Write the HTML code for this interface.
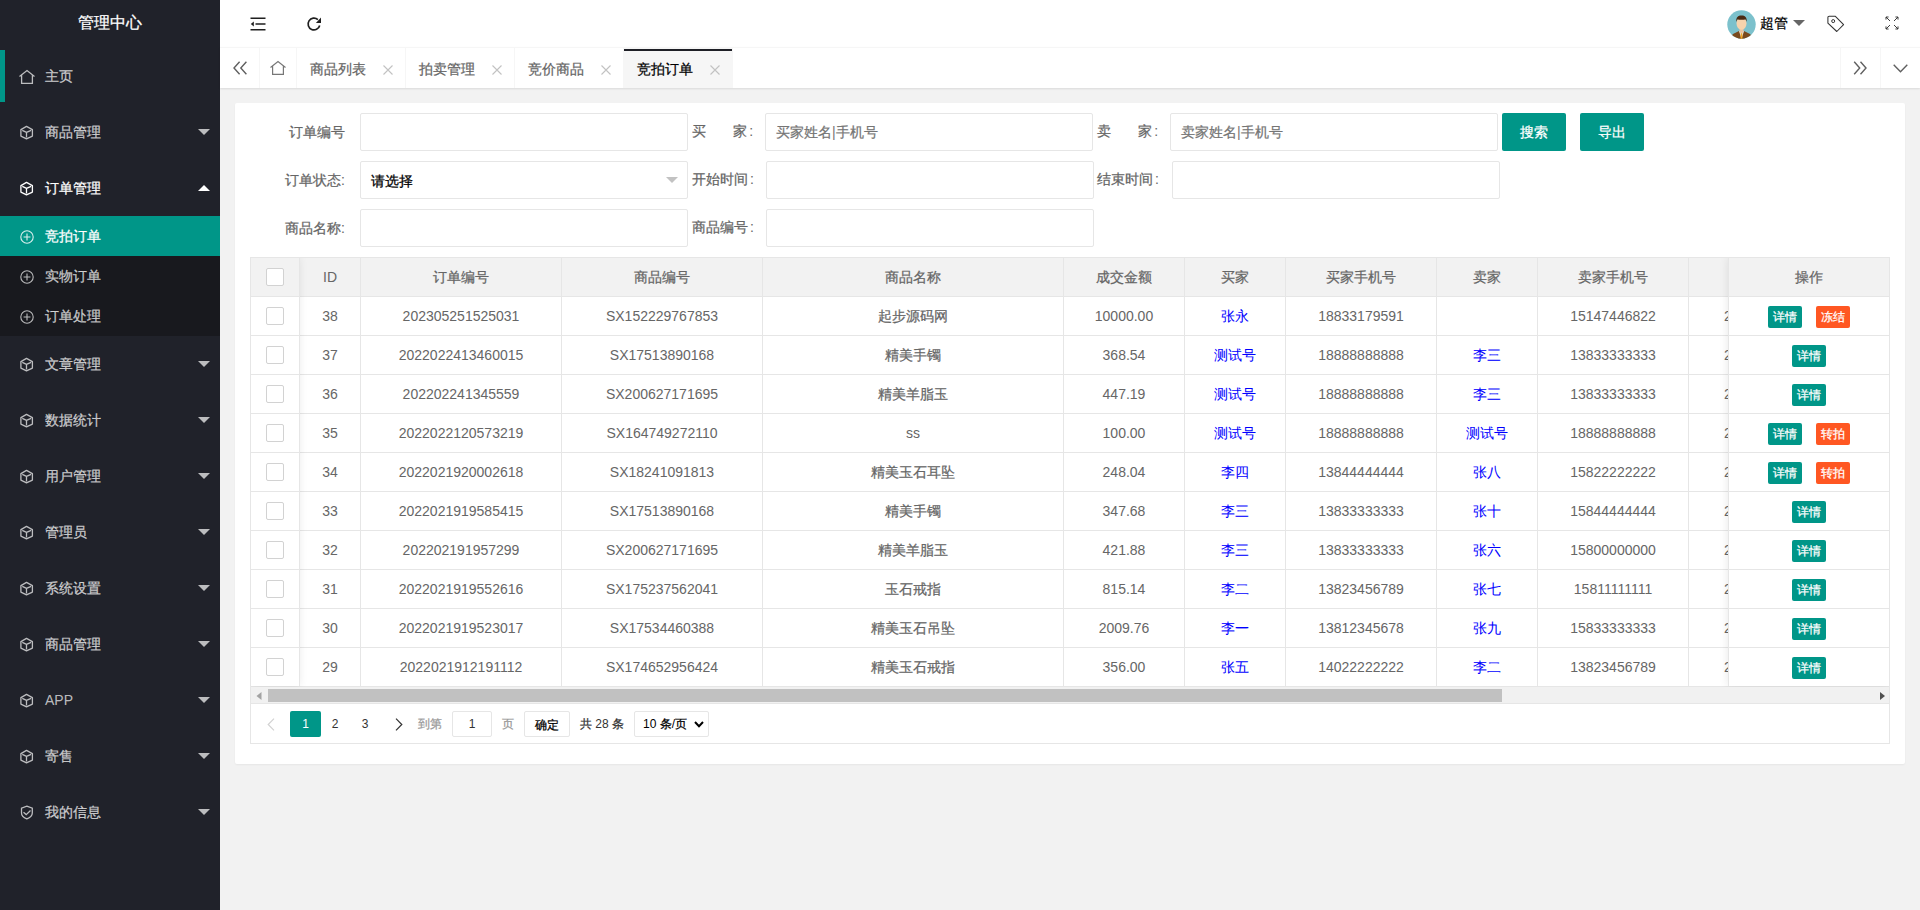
<!DOCTYPE html><html><head><meta charset="utf-8"><style>
*{box-sizing:border-box;margin:0;padding:0}
html,body{width:1920px;height:910px;overflow:hidden;background:#f2f2f2;font-family:"Liberation Sans",sans-serif;font-size:14px;color:#666}
body{position:relative}
.a{position:absolute}
svg.a{overflow:visible}
.side{left:0;top:0;width:220px;height:910px;background:#20222a}
.logo{left:0;top:0;width:220px;height:45px;line-height:45px;text-align:center;color:#fff;font-size:16px}
.mt{left:45px;line-height:16px;color:rgba(255,255,255,.7);white-space:nowrap}
.mt.w{color:#fff}
.tri{width:0;height:0;border-left:6px solid transparent;border-right:6px solid transparent}
.tri.dn{border-top:6px solid rgba(255,255,255,.7)}
.tri.up{border-bottom:6px solid #fff}
.hdr{left:220px;top:0;width:1700px;height:47px;background:#fff}
.tabs{left:220px;top:47px;width:1700px;height:41px;background:#fff;border-top:1px solid #f6f6f6;box-shadow:0 1px 2px 0 rgba(0,0,0,.1)}
.tb{top:0;height:40px;border-right:1px solid #f6f6f6}
.tt{line-height:16px;white-space:nowrap;color:#666}
.card{left:235px;top:103px;width:1670px;height:661px;background:#fff;border-radius:2px;box-shadow:0 1px 2px 0 rgba(0,0,0,.05)}
.lbl{line-height:16px;color:#666;white-space:nowrap}
.inp{height:38px;border:1px solid #e6e6e6;border-radius:2px;background:#fff}
.ph{line-height:16px;color:#757575;white-space:nowrap}
.btn{height:38px;line-height:38px;width:64px;text-align:center;color:#fff;background:#009688;border-radius:2px}
.tbl{left:250px;top:257px;width:1640px;height:487px;border:1px solid #e6e6e6;background:#fff;overflow:hidden}
.hl{background:#e6e6e6}
.ct{line-height:16px;white-space:nowrap;color:#666;text-align:center}
.bl{color:#00f}
.cb{width:18px;height:18px;border:1px solid #d2d2d2;border-radius:2px;background:#fff}
.xb{height:22px;line-height:22px;width:34px;text-align:center;color:#fff;font-size:12px;border-radius:2px;background:#009688}
.xb.o{background:#ff5722}
.c{font-style:normal;-webkit-text-stroke:0.25px}
.bl .c{-webkit-text-stroke:0.05px}
</style></head><body>
<div class="a side">
<div class="a logo"><i class="c">管理中心</i></div>
<div class="a" style="left:0;top:50px;width:5px;height:52px;background:#009688"></div>
<svg class="a" style="left:19px;top:70px" width="16" height="14" viewBox="0 0 16 14"><path d="M0.5 6.5 L8 0.6 L15.5 6.5 M2.6 5 V13.4 H13.4 V5" fill="none" stroke="rgba(255,255,255,.7)" stroke-width="1.3" stroke-linejoin="miter"/></svg>
<div class="a mt" style="top:68px"><i class="c">主页</i></div>
<svg class="a" style="left:20px;top:125px" width="14" height="15" viewBox="0 0 14 15"><path d="M6.5 1.4 L12.4 4.6 V11.1 L6.5 13.9 L0.9 11.1 V4.6 Z M2.3 5.3 L6.5 7.4 L11.1 5.3 M6.5 7.4 V12.4" fill="none" stroke="rgba(255,255,255,.7)" stroke-width="1.3" stroke-linejoin="round"/></svg>
<div class="a mt" style="top:124px"><i class="c">商品管理</i></div>
<div class="a tri dn" style="left:198px;top:129px"></div>
<svg class="a" style="left:20px;top:181px" width="14" height="15" viewBox="0 0 14 15"><path d="M6.5 1.4 L12.4 4.6 V11.1 L6.5 13.9 L0.9 11.1 V4.6 Z M2.3 5.3 L6.5 7.4 L11.1 5.3 M6.5 7.4 V12.4" fill="none" stroke="#fff" stroke-width="1.3" stroke-linejoin="round"/></svg>
<div class="a mt w" style="top:180px"><i class="c">订单管理</i></div>
<div class="a tri up" style="left:198px;top:185px"></div>
<svg class="a" style="left:20px;top:357px" width="14" height="15" viewBox="0 0 14 15"><path d="M6.5 1.4 L12.4 4.6 V11.1 L6.5 13.9 L0.9 11.1 V4.6 Z M2.3 5.3 L6.5 7.4 L11.1 5.3 M6.5 7.4 V12.4" fill="none" stroke="rgba(255,255,255,.7)" stroke-width="1.3" stroke-linejoin="round"/></svg>
<div class="a mt" style="top:356px"><i class="c">文章管理</i></div>
<div class="a tri dn" style="left:198px;top:361px"></div>
<svg class="a" style="left:20px;top:413px" width="14" height="15" viewBox="0 0 14 15"><path d="M6.5 1.4 L12.4 4.6 V11.1 L6.5 13.9 L0.9 11.1 V4.6 Z M2.3 5.3 L6.5 7.4 L11.1 5.3 M6.5 7.4 V12.4" fill="none" stroke="rgba(255,255,255,.7)" stroke-width="1.3" stroke-linejoin="round"/></svg>
<div class="a mt" style="top:412px"><i class="c">数据统计</i></div>
<div class="a tri dn" style="left:198px;top:417px"></div>
<svg class="a" style="left:20px;top:469px" width="14" height="15" viewBox="0 0 14 15"><path d="M6.5 1.4 L12.4 4.6 V11.1 L6.5 13.9 L0.9 11.1 V4.6 Z M2.3 5.3 L6.5 7.4 L11.1 5.3 M6.5 7.4 V12.4" fill="none" stroke="rgba(255,255,255,.7)" stroke-width="1.3" stroke-linejoin="round"/></svg>
<div class="a mt" style="top:468px"><i class="c">用户管理</i></div>
<div class="a tri dn" style="left:198px;top:473px"></div>
<svg class="a" style="left:20px;top:525px" width="14" height="15" viewBox="0 0 14 15"><path d="M6.5 1.4 L12.4 4.6 V11.1 L6.5 13.9 L0.9 11.1 V4.6 Z M2.3 5.3 L6.5 7.4 L11.1 5.3 M6.5 7.4 V12.4" fill="none" stroke="rgba(255,255,255,.7)" stroke-width="1.3" stroke-linejoin="round"/></svg>
<div class="a mt" style="top:524px"><i class="c">管理员</i></div>
<div class="a tri dn" style="left:198px;top:529px"></div>
<svg class="a" style="left:20px;top:581px" width="14" height="15" viewBox="0 0 14 15"><path d="M6.5 1.4 L12.4 4.6 V11.1 L6.5 13.9 L0.9 11.1 V4.6 Z M2.3 5.3 L6.5 7.4 L11.1 5.3 M6.5 7.4 V12.4" fill="none" stroke="rgba(255,255,255,.7)" stroke-width="1.3" stroke-linejoin="round"/></svg>
<div class="a mt" style="top:580px"><i class="c">系统设置</i></div>
<div class="a tri dn" style="left:198px;top:585px"></div>
<svg class="a" style="left:20px;top:637px" width="14" height="15" viewBox="0 0 14 15"><path d="M6.5 1.4 L12.4 4.6 V11.1 L6.5 13.9 L0.9 11.1 V4.6 Z M2.3 5.3 L6.5 7.4 L11.1 5.3 M6.5 7.4 V12.4" fill="none" stroke="rgba(255,255,255,.7)" stroke-width="1.3" stroke-linejoin="round"/></svg>
<div class="a mt" style="top:636px"><i class="c">商品管理</i></div>
<div class="a tri dn" style="left:198px;top:641px"></div>
<svg class="a" style="left:20px;top:693px" width="14" height="15" viewBox="0 0 14 15"><path d="M6.5 1.4 L12.4 4.6 V11.1 L6.5 13.9 L0.9 11.1 V4.6 Z M2.3 5.3 L6.5 7.4 L11.1 5.3 M6.5 7.4 V12.4" fill="none" stroke="rgba(255,255,255,.7)" stroke-width="1.3" stroke-linejoin="round"/></svg>
<div class="a mt" style="top:692px">APP</div>
<div class="a tri dn" style="left:198px;top:697px"></div>
<svg class="a" style="left:20px;top:749px" width="14" height="15" viewBox="0 0 14 15"><path d="M6.5 1.4 L12.4 4.6 V11.1 L6.5 13.9 L0.9 11.1 V4.6 Z M2.3 5.3 L6.5 7.4 L11.1 5.3 M6.5 7.4 V12.4" fill="none" stroke="rgba(255,255,255,.7)" stroke-width="1.3" stroke-linejoin="round"/></svg>
<div class="a mt" style="top:748px"><i class="c">寄售</i></div>
<div class="a tri dn" style="left:198px;top:753px"></div>
<svg class="a" style="left:20px;top:805px" width="14" height="15" viewBox="0 0 14 15"><path d="M6.8 1.2 L12.3 3.2 V8 C12.3 10.8 9.8 12.8 6.8 13.9 C3.8 12.8 1.5 10.8 1.5 8 V3.2 Z" fill="none" stroke="rgba(255,255,255,.7)" stroke-width="1.3"/><path d="M3.5 7.3 L6.2 9.6 L10.5 5.5" fill="none" stroke="rgba(255,255,255,.7)" stroke-width="1.3"/></svg>
<div class="a mt" style="top:804px"><i class="c">我的信息</i></div>
<div class="a tri dn" style="left:198px;top:809px"></div>
<div class="a" style="left:0;top:216px;width:220px;height:120px;background:#18191e"></div>
<div class="a" style="left:0;top:216px;width:220px;height:40px;background:#009688"></div>
<svg class="a" style="left:20px;top:229.5px" width="14" height="14" viewBox="0 0 14 14"><circle cx="7" cy="7" r="6.2" fill="none" stroke="rgba(255,255,255,.85)" stroke-width="1.1"/><path d="M7 3.6 V10.4 M3.6 7 H10.4" stroke="rgba(255,255,255,.85)" stroke-width="1.1"/></svg>
<div class="a mt w" style="top:228px"><i class="c">竞拍订单</i></div>
<svg class="a" style="left:20px;top:269.5px" width="14" height="14" viewBox="0 0 14 14"><circle cx="7" cy="7" r="6.2" fill="none" stroke="rgba(255,255,255,.7)" stroke-width="1.1"/><path d="M7 3.6 V10.4 M3.6 7 H10.4" stroke="rgba(255,255,255,.7)" stroke-width="1.1"/></svg>
<div class="a mt" style="top:268px"><i class="c">实物订单</i></div>
<svg class="a" style="left:20px;top:309.5px" width="14" height="14" viewBox="0 0 14 14"><circle cx="7" cy="7" r="6.2" fill="none" stroke="rgba(255,255,255,.7)" stroke-width="1.1"/><path d="M7 3.6 V10.4 M3.6 7 H10.4" stroke="rgba(255,255,255,.7)" stroke-width="1.1"/></svg>
<div class="a mt" style="top:308px"><i class="c">订单处理</i></div>
</div>
<div class="a hdr">
<svg class="a" style="left:30px;top:17px" width="16" height="14" viewBox="0 0 16 14"><path d="M0.5 1.2 H15.5 M5.5 7 H15.5 M0.5 12.8 H15.5" stroke="#1f1f1f" stroke-width="1.6"/><path d="M0.8 7 L3.8 4.6 V9.4 Z" fill="#1f1f1f"/></svg>
<svg class="a" style="left:87px;top:17px" width="15" height="14" viewBox="0 0 15 14"><path d="M12.7 8.5 A5.9 5.9 0 1 1 10.9 2.6" fill="none" stroke="#1f1f1f" stroke-width="1.7"/><path d="M14 0.4 V6 H8.9 Z" fill="#1f1f1f"/></svg>
<svg class="a" style="left:1507px;top:10px" width="29" height="29" viewBox="0 0 29 29"><defs><clipPath id="cc"><circle cx="14.5" cy="14.5" r="14.2"/></clipPath></defs><circle cx="14.5" cy="14.5" r="14.2" fill="#7cc1cc"/><g clip-path="url(#cc)"><path d="M2 29 L6 24 L12 21 H17 L23 24 L27 29 Z" fill="#7a4a1e"/><path d="M12 21 L14.5 29 L17 21 Z" fill="#e8e8e8"/><path d="M13.8 22.5 H15.2 L15.5 29 H13.5 Z" fill="#f2a623"/><path d="M12.5 18 H16.5 V22 L14.5 23.5 L12.5 22 Z" fill="#e9c3a0"/><ellipse cx="14.5" cy="13.5" rx="5" ry="6.2" fill="#f7d3ad"/><path d="M9.2 12 C9 7 11 5.5 14.5 5.5 C18 5.5 20 7 19.8 12 L18.8 9.5 C17 9.8 12 9.8 10.2 9.5 Z" fill="#4a2a12"/></g></svg>
<div class="a" style="left:1540px;top:15px;line-height:16px;color:#000;font-size:14px"><i class="c">超管</i></div>
<div class="a tri" style="left:1573px;top:20px;border-left-width:6px;border-right-width:6px;border-top:6px solid #666"></div>
<svg class="a" style="left:1607px;top:15px" width="18" height="18" viewBox="0 0 18 18"><path d="M0.9 2.6 Q0.9 1.3 2.2 1.3 H8.4 L16.6 9.7 L9.8 16.5 L0.9 8.2 Z" fill="none" stroke="#333" stroke-width="1.05" stroke-linejoin="round"/><circle cx="6.2" cy="6.1" r="1.5" fill="none" stroke="#333" stroke-width="1"/></svg>
<svg class="a" style="left:1665px;top:16px" width="14" height="14" viewBox="0 0 14 14"><g stroke="#333" stroke-width="0.95" fill="none"><path d="M1 3.6 V1 H3.6 M1 1 L5 5"/><path d="M13 3.6 V1 H10.4 M13 1 L9 5"/><path d="M1 10.4 V13 H3.6 M1 13 L5 9"/><path d="M13 10.4 V13 H10.4 M13 13 L9 9"/></g></svg>
</div>
<div class="a tabs">
<div class="a tb" style="left:0;width:40px"></div>
<svg class="a" style="left:13px;top:13px" width="14" height="14" viewBox="0 0 14 14"><path d="M6.6 0.8 L1 7 L6.6 13.2 M13.4 0.8 L7.8 7 L13.4 13.2" fill="none" stroke="#606060" stroke-width="1.4"/></svg>
<div class="a tb" style="left:40px;width:37px"></div>
<svg class="a" style="left:50px;top:13px" width="16" height="14" viewBox="0 0 16 14"><path d="M0.5 6.5 L8 0.6 L15.5 6.5 M2.6 5 V13.4 H13.4 V5" fill="none" stroke="#777" stroke-width="1.2" stroke-linejoin="miter"/></svg>
<div class="a tb" style="left:77px;width:109px"></div>
<div class="a tt" style="left:90px;top:13px;"><i class="c">商品列表</i></div>
<svg class="a" style="left:163px;top:17px" width="10" height="10" viewBox="0 0 10 10"><path d="M0.5 0.5 L9.5 9.5 M9.5 0.5 L0.5 9.5" stroke="#c2c2c2" stroke-width="1.1"/></svg>
<div class="a tb" style="left:186px;width:109px"></div>
<div class="a tt" style="left:199px;top:13px;"><i class="c">拍卖管理</i></div>
<svg class="a" style="left:272px;top:17px" width="10" height="10" viewBox="0 0 10 10"><path d="M0.5 0.5 L9.5 9.5 M9.5 0.5 L0.5 9.5" stroke="#c2c2c2" stroke-width="1.1"/></svg>
<div class="a tb" style="left:295px;width:109px"></div>
<div class="a tt" style="left:308px;top:13px;"><i class="c">竞价商品</i></div>
<svg class="a" style="left:381px;top:17px" width="10" height="10" viewBox="0 0 10 10"><path d="M0.5 0.5 L9.5 9.5 M9.5 0.5 L0.5 9.5" stroke="#c2c2c2" stroke-width="1.1"/></svg>
<div class="a" style="left:403px;top:0;width:110px;height:40px;background:#f6f6f6"></div>
<div class="a" style="left:404px;top:1px;width:108px;height:2px;background:#1e1f26"></div>
<div class="a tt" style="left:417px;top:13px;color:#000"><i class="c">竞拍订单</i></div>
<svg class="a" style="left:490px;top:17px" width="10" height="10" viewBox="0 0 10 10"><path d="M0.5 0.5 L9.5 9.5 M9.5 0.5 L0.5 9.5" stroke="#c2c2c2" stroke-width="1.1"/></svg>
<div class="a" style="left:1620px;top:0;width:1px;height:40px;background:#f6f6f6"></div>
<div class="a" style="left:1660px;top:0;width:1px;height:40px;background:#f6f6f6"></div>
<svg class="a" style="left:1633px;top:13px" width="14" height="14" viewBox="0 0 14 14"><path d="M1.2 0.8 L6.7 7 L1.2 13.2 M7.5 0.8 L13 7 L7.5 13.2" fill="none" stroke="#606060" stroke-width="1.4"/></svg>
<svg class="a" style="left:1673px;top:16px" width="15" height="9" viewBox="0 0 15 9"><path d="M0.7 0.7 L7.5 7.8 L14.3 0.7" fill="none" stroke="#606060" stroke-width="1.4"/></svg>
</div>
<div class="a card"></div>
<div class="a lbl" style="left:289px;top:124px"><i class="c">订单编号</i></div>
<div class="a inp" style="left:360px;top:113px;width:328px"></div>
<div class="a lbl" style="left:692px;top:123px"><i class="c">买</i>&nbsp;&nbsp;&nbsp;&nbsp;&nbsp;&nbsp;&nbsp;<i class="c">家</i><span style="margin-left:2px">:</span></div>
<div class="a inp" style="left:765px;top:113px;width:328px"></div>
<div class="a ph" style="left:776px;top:124px"><i class="c">买家姓名</i>|<i class="c">手机号</i></div>
<div class="a lbl" style="left:1097px;top:123px"><i class="c">卖</i>&nbsp;&nbsp;&nbsp;&nbsp;&nbsp;&nbsp;&nbsp;<i class="c">家</i><span style="margin-left:2px">:</span></div>
<div class="a inp" style="left:1170px;top:113px;width:328px"></div>
<div class="a ph" style="left:1181px;top:124px"><i class="c">卖家姓名</i>|<i class="c">手机号</i></div>
<div class="a btn" style="left:1502px;top:113px"><i class="c">搜索</i></div>
<div class="a btn" style="left:1580px;top:113px"><i class="c">导出</i></div>
<div class="a lbl" style="left:285px;top:172px"><i class="c">订单状态</i>:</div>
<div class="a inp" style="left:360px;top:161px;width:328px"></div>
<div class="a" style="left:371px;top:173px;line-height:16px;color:#000"><i class="c">请选择</i></div>
<div class="a tri" style="left:666px;top:177px;border-left-width:6px;border-right-width:6px;border-top:6px solid #c2c2c2"></div>
<div class="a lbl" style="left:692px;top:171px"><i class="c">开始时间</i><span style="margin-left:2px">:</span></div>
<div class="a inp" style="left:766px;top:161px;width:328px"></div>
<div class="a lbl" style="left:1097px;top:171px"><i class="c">结束时间</i><span style="margin-left:2px">:</span></div>
<div class="a inp" style="left:1172px;top:161px;width:328px"></div>
<div class="a lbl" style="left:285px;top:220px"><i class="c">商品名称</i>:</div>
<div class="a inp" style="left:360px;top:209px;width:328px"></div>
<div class="a lbl" style="left:692px;top:219px"><i class="c">商品编号</i><span style="margin-left:2px">:</span></div>
<div class="a inp" style="left:766px;top:209px;width:328px"></div>
<div class="a" style="left:250px;top:257px;width:1640px;height:487px;border:1px solid #e6e6e6;background:#fff"></div>
<div class="a" style="left:251px;top:258px;width:1638px;height:38px;background:#f2f2f2"></div>
<div class="a hl" style="left:251px;top:296px;width:1638px;height:1px"></div>
<div class="a hl" style="left:251px;top:335px;width:1638px;height:1px"></div>
<div class="a hl" style="left:251px;top:374px;width:1638px;height:1px"></div>
<div class="a hl" style="left:251px;top:413px;width:1638px;height:1px"></div>
<div class="a hl" style="left:251px;top:452px;width:1638px;height:1px"></div>
<div class="a hl" style="left:251px;top:491px;width:1638px;height:1px"></div>
<div class="a hl" style="left:251px;top:530px;width:1638px;height:1px"></div>
<div class="a hl" style="left:251px;top:569px;width:1638px;height:1px"></div>
<div class="a hl" style="left:251px;top:608px;width:1638px;height:1px"></div>
<div class="a hl" style="left:251px;top:647px;width:1638px;height:1px"></div>
<div class="a hl" style="left:251px;top:686px;width:1638px;height:1px"></div>
<div class="a hl" style="left:299px;top:258px;width:1px;height:428px"></div>
<div class="a hl" style="left:360px;top:258px;width:1px;height:428px"></div>
<div class="a hl" style="left:561px;top:258px;width:1px;height:428px"></div>
<div class="a hl" style="left:762px;top:258px;width:1px;height:428px"></div>
<div class="a hl" style="left:1063px;top:258px;width:1px;height:428px"></div>
<div class="a hl" style="left:1184px;top:258px;width:1px;height:428px"></div>
<div class="a hl" style="left:1285px;top:258px;width:1px;height:428px"></div>
<div class="a hl" style="left:1436px;top:258px;width:1px;height:428px"></div>
<div class="a hl" style="left:1537px;top:258px;width:1px;height:428px"></div>
<div class="a hl" style="left:1688px;top:258px;width:1px;height:428px"></div>
<div class="a ct" style="left:300px;top:269px;width:60px">ID</div>
<div class="a ct" style="left:361px;top:269px;width:200px"><i class="c">订单编号</i></div>
<div class="a ct" style="left:562px;top:269px;width:200px"><i class="c">商品编号</i></div>
<div class="a ct" style="left:763px;top:269px;width:300px"><i class="c">商品名称</i></div>
<div class="a ct" style="left:1064px;top:269px;width:120px"><i class="c">成交金额</i></div>
<div class="a ct" style="left:1185px;top:269px;width:100px"><i class="c">买家</i></div>
<div class="a ct" style="left:1286px;top:269px;width:150px"><i class="c">买家手机号</i></div>
<div class="a ct" style="left:1437px;top:269px;width:100px"><i class="c">卖家</i></div>
<div class="a ct" style="left:1538px;top:269px;width:150px"><i class="c">卖家手机号</i></div>
<div class="a ct" style="left:300px;top:308px;width:60px">38</div>
<div class="a ct" style="left:361px;top:308px;width:200px">202305251525031</div>
<div class="a ct" style="left:562px;top:308px;width:200px">SX152229767853</div>
<div class="a ct" style="left:763px;top:308px;width:300px"><i class="c">起步源码网</i></div>
<div class="a ct" style="left:1064px;top:308px;width:120px">10000.00</div>
<div class="a ct bl" style="left:1185px;top:308px;width:100px"><i class="c">张永</i></div>
<div class="a ct" style="left:1286px;top:308px;width:150px">18833179591</div>
<div class="a ct bl" style="left:1437px;top:308px;width:100px"></div>
<div class="a ct" style="left:1538px;top:308px;width:150px">15147446822</div>
<div class="a ct" style="left:1724px;top:308px;text-align:left">2022-02-19 12:19:11</div>
<div class="a ct" style="left:300px;top:347px;width:60px">37</div>
<div class="a ct" style="left:361px;top:347px;width:200px">2022022413460015</div>
<div class="a ct" style="left:562px;top:347px;width:200px">SX17513890168</div>
<div class="a ct" style="left:763px;top:347px;width:300px"><i class="c">精美手镯</i></div>
<div class="a ct" style="left:1064px;top:347px;width:120px">368.54</div>
<div class="a ct bl" style="left:1185px;top:347px;width:100px"><i class="c">测试号</i></div>
<div class="a ct" style="left:1286px;top:347px;width:150px">18888888888</div>
<div class="a ct bl" style="left:1437px;top:347px;width:100px"><i class="c">李三</i></div>
<div class="a ct" style="left:1538px;top:347px;width:150px">13833333333</div>
<div class="a ct" style="left:1724px;top:347px;text-align:left">2022-02-19 12:19:11</div>
<div class="a ct" style="left:300px;top:386px;width:60px">36</div>
<div class="a ct" style="left:361px;top:386px;width:200px">202202241345559</div>
<div class="a ct" style="left:562px;top:386px;width:200px">SX200627171695</div>
<div class="a ct" style="left:763px;top:386px;width:300px"><i class="c">精美羊脂玉</i></div>
<div class="a ct" style="left:1064px;top:386px;width:120px">447.19</div>
<div class="a ct bl" style="left:1185px;top:386px;width:100px"><i class="c">测试号</i></div>
<div class="a ct" style="left:1286px;top:386px;width:150px">18888888888</div>
<div class="a ct bl" style="left:1437px;top:386px;width:100px"><i class="c">李三</i></div>
<div class="a ct" style="left:1538px;top:386px;width:150px">13833333333</div>
<div class="a ct" style="left:1724px;top:386px;text-align:left">2022-02-19 12:19:11</div>
<div class="a ct" style="left:300px;top:425px;width:60px">35</div>
<div class="a ct" style="left:361px;top:425px;width:200px">2022022120573219</div>
<div class="a ct" style="left:562px;top:425px;width:200px">SX164749272110</div>
<div class="a ct" style="left:763px;top:425px;width:300px">ss</div>
<div class="a ct" style="left:1064px;top:425px;width:120px">100.00</div>
<div class="a ct bl" style="left:1185px;top:425px;width:100px"><i class="c">测试号</i></div>
<div class="a ct" style="left:1286px;top:425px;width:150px">18888888888</div>
<div class="a ct bl" style="left:1437px;top:425px;width:100px"><i class="c">测试号</i></div>
<div class="a ct" style="left:1538px;top:425px;width:150px">18888888888</div>
<div class="a ct" style="left:1724px;top:425px;text-align:left">2022-02-19 12:19:11</div>
<div class="a ct" style="left:300px;top:464px;width:60px">34</div>
<div class="a ct" style="left:361px;top:464px;width:200px">2022021920002618</div>
<div class="a ct" style="left:562px;top:464px;width:200px">SX18241091813</div>
<div class="a ct" style="left:763px;top:464px;width:300px"><i class="c">精美玉石耳坠</i></div>
<div class="a ct" style="left:1064px;top:464px;width:120px">248.04</div>
<div class="a ct bl" style="left:1185px;top:464px;width:100px"><i class="c">李四</i></div>
<div class="a ct" style="left:1286px;top:464px;width:150px">13844444444</div>
<div class="a ct bl" style="left:1437px;top:464px;width:100px"><i class="c">张八</i></div>
<div class="a ct" style="left:1538px;top:464px;width:150px">15822222222</div>
<div class="a ct" style="left:1724px;top:464px;text-align:left">2022-02-19 12:19:11</div>
<div class="a ct" style="left:300px;top:503px;width:60px">33</div>
<div class="a ct" style="left:361px;top:503px;width:200px">2022021919585415</div>
<div class="a ct" style="left:562px;top:503px;width:200px">SX17513890168</div>
<div class="a ct" style="left:763px;top:503px;width:300px"><i class="c">精美手镯</i></div>
<div class="a ct" style="left:1064px;top:503px;width:120px">347.68</div>
<div class="a ct bl" style="left:1185px;top:503px;width:100px"><i class="c">李三</i></div>
<div class="a ct" style="left:1286px;top:503px;width:150px">13833333333</div>
<div class="a ct bl" style="left:1437px;top:503px;width:100px"><i class="c">张十</i></div>
<div class="a ct" style="left:1538px;top:503px;width:150px">15844444444</div>
<div class="a ct" style="left:1724px;top:503px;text-align:left">2022-02-19 12:19:11</div>
<div class="a ct" style="left:300px;top:542px;width:60px">32</div>
<div class="a ct" style="left:361px;top:542px;width:200px">202202191957299</div>
<div class="a ct" style="left:562px;top:542px;width:200px">SX200627171695</div>
<div class="a ct" style="left:763px;top:542px;width:300px"><i class="c">精美羊脂玉</i></div>
<div class="a ct" style="left:1064px;top:542px;width:120px">421.88</div>
<div class="a ct bl" style="left:1185px;top:542px;width:100px"><i class="c">李三</i></div>
<div class="a ct" style="left:1286px;top:542px;width:150px">13833333333</div>
<div class="a ct bl" style="left:1437px;top:542px;width:100px"><i class="c">张六</i></div>
<div class="a ct" style="left:1538px;top:542px;width:150px">15800000000</div>
<div class="a ct" style="left:1724px;top:542px;text-align:left">2022-02-19 12:19:11</div>
<div class="a ct" style="left:300px;top:581px;width:60px">31</div>
<div class="a ct" style="left:361px;top:581px;width:200px">2022021919552616</div>
<div class="a ct" style="left:562px;top:581px;width:200px">SX175237562041</div>
<div class="a ct" style="left:763px;top:581px;width:300px"><i class="c">玉石戒指</i></div>
<div class="a ct" style="left:1064px;top:581px;width:120px">815.14</div>
<div class="a ct bl" style="left:1185px;top:581px;width:100px"><i class="c">李二</i></div>
<div class="a ct" style="left:1286px;top:581px;width:150px">13823456789</div>
<div class="a ct bl" style="left:1437px;top:581px;width:100px"><i class="c">张七</i></div>
<div class="a ct" style="left:1538px;top:581px;width:150px">15811111111</div>
<div class="a ct" style="left:1724px;top:581px;text-align:left">2022-02-19 12:19:11</div>
<div class="a ct" style="left:300px;top:620px;width:60px">30</div>
<div class="a ct" style="left:361px;top:620px;width:200px">2022021919523017</div>
<div class="a ct" style="left:562px;top:620px;width:200px">SX17534460388</div>
<div class="a ct" style="left:763px;top:620px;width:300px"><i class="c">精美玉石吊坠</i></div>
<div class="a ct" style="left:1064px;top:620px;width:120px">2009.76</div>
<div class="a ct bl" style="left:1185px;top:620px;width:100px"><i class="c">李一</i></div>
<div class="a ct" style="left:1286px;top:620px;width:150px">13812345678</div>
<div class="a ct bl" style="left:1437px;top:620px;width:100px"><i class="c">张九</i></div>
<div class="a ct" style="left:1538px;top:620px;width:150px">15833333333</div>
<div class="a ct" style="left:1724px;top:620px;text-align:left">2022-02-19 12:19:11</div>
<div class="a ct" style="left:300px;top:659px;width:60px">29</div>
<div class="a ct" style="left:361px;top:659px;width:200px">2022021912191112</div>
<div class="a ct" style="left:562px;top:659px;width:200px">SX174652956424</div>
<div class="a ct" style="left:763px;top:659px;width:300px"><i class="c">精美玉石戒指</i></div>
<div class="a ct" style="left:1064px;top:659px;width:120px">356.00</div>
<div class="a ct bl" style="left:1185px;top:659px;width:100px"><i class="c">张五</i></div>
<div class="a ct" style="left:1286px;top:659px;width:150px">14022222222</div>
<div class="a ct bl" style="left:1437px;top:659px;width:100px"><i class="c">李二</i></div>
<div class="a ct" style="left:1538px;top:659px;width:150px">13823456789</div>
<div class="a ct" style="left:1724px;top:659px;text-align:left">2022-02-19 12:19:11</div>
<div class="a" style="left:1728px;top:258px;width:161px;height:428px;background:#fff;box-shadow:-1px 0 8px rgba(0,0,0,.08);clip-path:inset(0 0 -12px -12px)"></div>
<div class="a" style="left:1728px;top:258px;width:161px;height:38px;background:#f2f2f2"></div>
<div class="a hl" style="left:1728px;top:258px;width:1px;height:428px"></div>
<div class="a hl" style="left:1729px;top:296px;width:160px;height:1px"></div>
<div class="a hl" style="left:1729px;top:335px;width:160px;height:1px"></div>
<div class="a hl" style="left:1729px;top:374px;width:160px;height:1px"></div>
<div class="a hl" style="left:1729px;top:413px;width:160px;height:1px"></div>
<div class="a hl" style="left:1729px;top:452px;width:160px;height:1px"></div>
<div class="a hl" style="left:1729px;top:491px;width:160px;height:1px"></div>
<div class="a hl" style="left:1729px;top:530px;width:160px;height:1px"></div>
<div class="a hl" style="left:1729px;top:569px;width:160px;height:1px"></div>
<div class="a hl" style="left:1729px;top:608px;width:160px;height:1px"></div>
<div class="a hl" style="left:1729px;top:647px;width:160px;height:1px"></div>
<div class="a ct" style="left:1729px;top:269px;width:160px"><i class="c">操作</i></div>
<div class="a xb" style="left:1768px;top:306px"><i class="c">详情</i></div>
<div class="a xb o" style="left:1816px;top:306px"><i class="c">冻结</i></div>
<div class="a xb" style="left:1792px;top:345px"><i class="c">详情</i></div>
<div class="a xb" style="left:1792px;top:384px"><i class="c">详情</i></div>
<div class="a xb" style="left:1768px;top:423px"><i class="c">详情</i></div>
<div class="a xb o" style="left:1816px;top:423px"><i class="c">转拍</i></div>
<div class="a xb" style="left:1768px;top:462px"><i class="c">详情</i></div>
<div class="a xb o" style="left:1816px;top:462px"><i class="c">转拍</i></div>
<div class="a xb" style="left:1792px;top:501px"><i class="c">详情</i></div>
<div class="a xb" style="left:1792px;top:540px"><i class="c">详情</i></div>
<div class="a xb" style="left:1792px;top:579px"><i class="c">详情</i></div>
<div class="a xb" style="left:1792px;top:618px"><i class="c">详情</i></div>
<div class="a xb" style="left:1792px;top:657px"><i class="c">详情</i></div>
<div class="a" style="left:251px;top:258px;width:48px;height:428px;background:#fff;box-shadow:1px 0 8px rgba(0,0,0,.08);clip-path:inset(0 -12px -12px 0)"></div>
<div class="a" style="left:251px;top:258px;width:48px;height:38px;background:#f2f2f2"></div>
<div class="a hl" style="left:299px;top:258px;width:1px;height:428px"></div>
<div class="a hl" style="left:251px;top:296px;width:48px;height:1px"></div>
<div class="a hl" style="left:251px;top:335px;width:48px;height:1px"></div>
<div class="a hl" style="left:251px;top:374px;width:48px;height:1px"></div>
<div class="a hl" style="left:251px;top:413px;width:48px;height:1px"></div>
<div class="a hl" style="left:251px;top:452px;width:48px;height:1px"></div>
<div class="a hl" style="left:251px;top:491px;width:48px;height:1px"></div>
<div class="a hl" style="left:251px;top:530px;width:48px;height:1px"></div>
<div class="a hl" style="left:251px;top:569px;width:48px;height:1px"></div>
<div class="a hl" style="left:251px;top:608px;width:48px;height:1px"></div>
<div class="a hl" style="left:251px;top:647px;width:48px;height:1px"></div>
<div class="a cb" style="left:266px;top:268px"></div>
<div class="a cb" style="left:266px;top:307px"></div>
<div class="a cb" style="left:266px;top:346px"></div>
<div class="a cb" style="left:266px;top:385px"></div>
<div class="a cb" style="left:266px;top:424px"></div>
<div class="a cb" style="left:266px;top:463px"></div>
<div class="a cb" style="left:266px;top:502px"></div>
<div class="a cb" style="left:266px;top:541px"></div>
<div class="a cb" style="left:266px;top:580px"></div>
<div class="a cb" style="left:266px;top:619px"></div>
<div class="a cb" style="left:266px;top:658px"></div>
<div class="a" style="left:251px;top:687px;width:1638px;height:16px;background:#f1f1f1"></div>
<div class="a" style="left:268px;top:689px;width:1234px;height:13px;background:#c1c1c1"></div>
<svg class="a" style="left:256px;top:692px" width="6" height="8" viewBox="0 0 6 8"><path d="M5.5 0 V8 L0.5 4 Z" fill="#a3a3a3"/></svg>
<svg class="a" style="left:1880px;top:692px" width="5" height="8" viewBox="0 0 5 8"><path d="M0 0 V8 L5 4 Z" fill="#505050"/></svg>
<div class="a hl" style="left:251px;top:703px;width:1638px;height:1px"></div>
<svg class="a" style="left:267px;top:718px" width="8" height="13" viewBox="0 0 8 13"><path d="M7 0.6 L1.2 6.5 L7 12.4" fill="none" stroke="#d2d2d2" stroke-width="1.2"/></svg>
<div class="a" style="left:290px;top:711px;width:31px;height:26px;background:#009688;border-radius:2px;color:#fff;text-align:center;line-height:26px;font-size:12px">1</div>
<div class="a" style="left:325px;top:711px;width:20px;height:26px;line-height:26px;text-align:center;color:#333;font-size:12px">2</div>
<div class="a" style="left:355px;top:711px;width:20px;height:26px;line-height:26px;text-align:center;color:#333;font-size:12px">3</div>
<svg class="a" style="left:395px;top:718px" width="8" height="13" viewBox="0 0 8 13"><path d="M1 0.6 L6.8 6.5 L1 12.4" fill="none" stroke="#333" stroke-width="1.2"/></svg>
<div class="a" style="left:418px;top:716px;line-height:16px;font-size:12px;color:#999"><i class="c">到第</i></div>
<div class="a" style="left:452px;top:711px;width:40px;height:26px;border:1px solid #e6e6e6;border-radius:2px;text-align:center;line-height:24px;color:#333;font-size:12px">1</div>
<div class="a" style="left:502px;top:716px;line-height:16px;font-size:12px;color:#999"><i class="c">页</i></div>
<div class="a" style="left:524px;top:711px;width:46px;height:26px;border:1px solid #e6e6e6;border-radius:2px;text-align:center;line-height:26px;font-size:12px;color:#000"><i class="c">确定</i></div>
<div class="a" style="left:580px;top:716px;line-height:16px;font-size:12px;color:#333;white-space:nowrap"><i class="c">共</i> 28 <i class="c">条</i></div>
<div class="a" style="left:634px;top:711px;width:75px;height:26px;border:1px solid #e6e6e6;border-radius:2px;background:#fff"></div>
<div class="a" style="left:643px;top:716px;line-height:16px;font-size:12px;color:#000;white-space:nowrap">10 <i class="c">条</i>/<i class="c">页</i></div>
<svg class="a" style="left:694px;top:721px" width="10" height="7" viewBox="0 0 10 7"><path d="M1 1 L5 5.2 L9 1" fill="none" stroke="#000" stroke-width="2"/></svg>
</body></html>
